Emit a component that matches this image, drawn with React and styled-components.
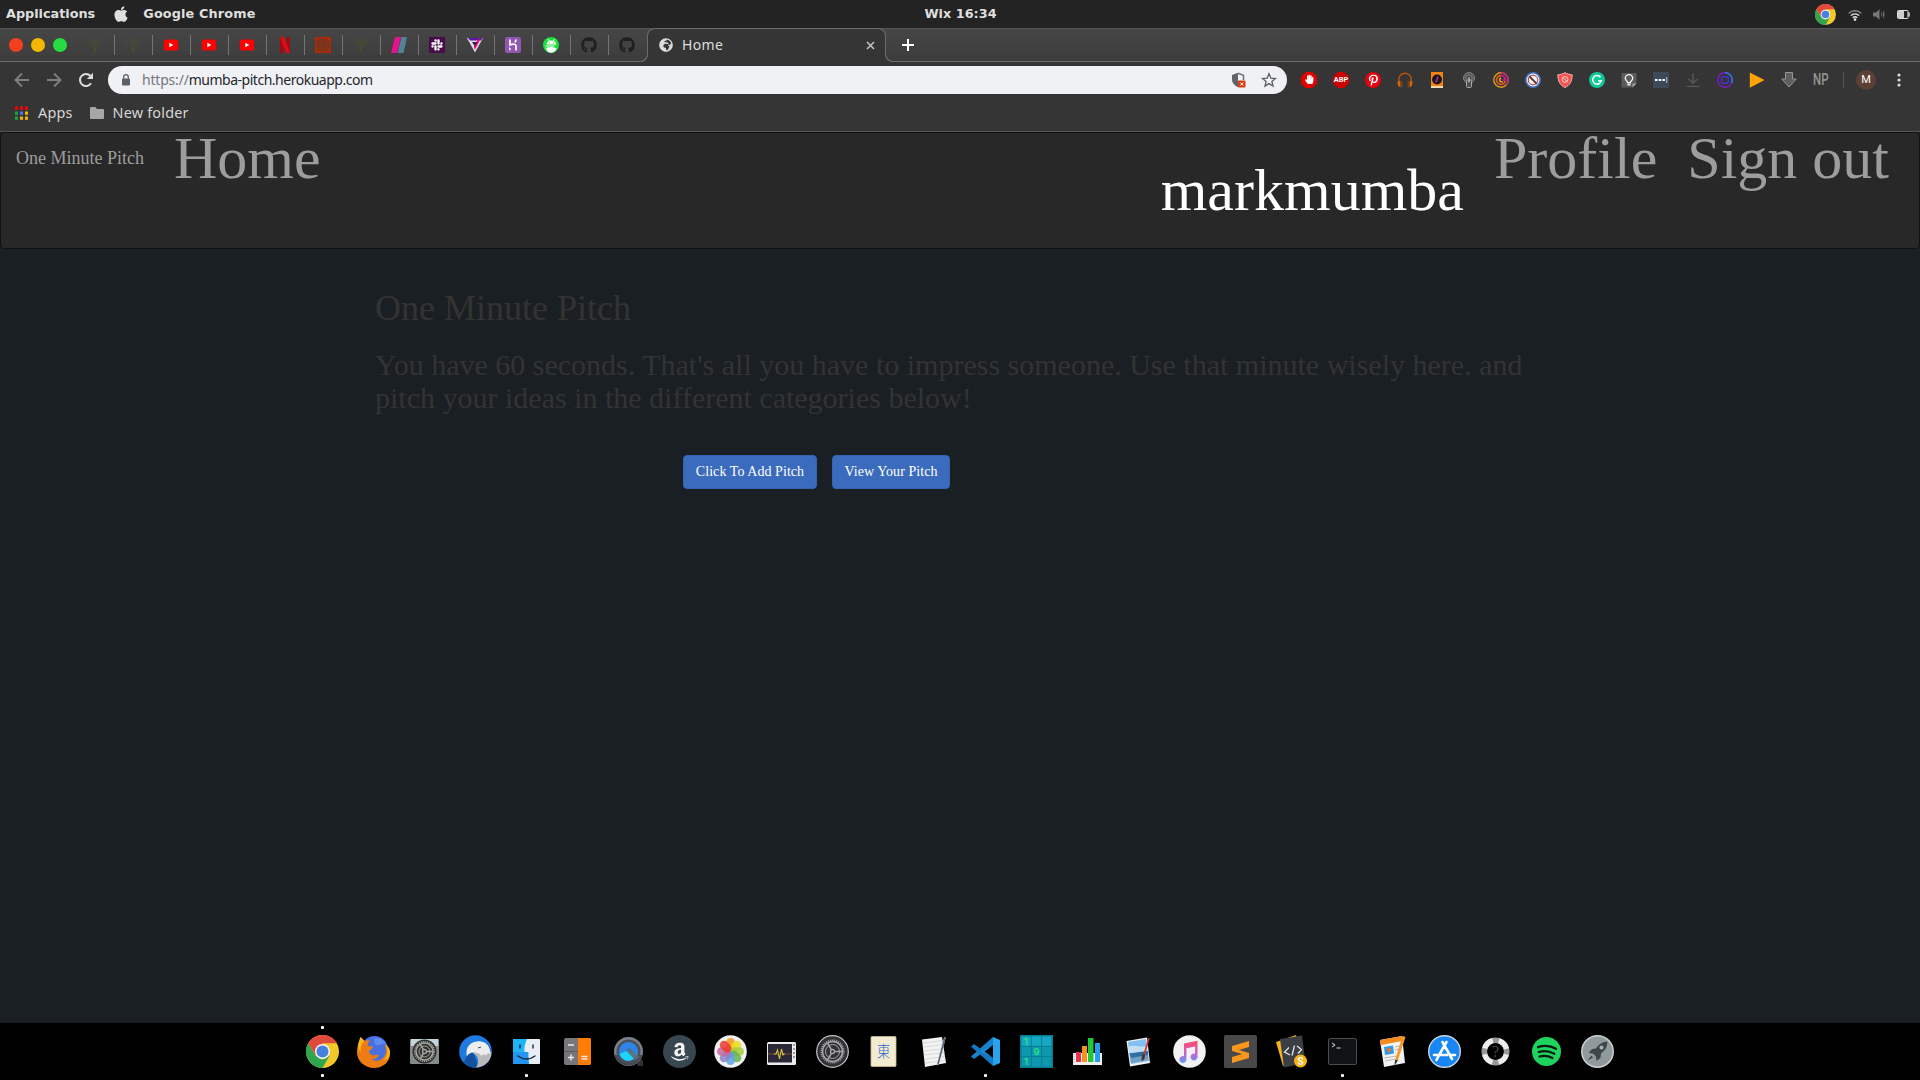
import React from "react";
import styled, { createGlobalStyle } from "styled-components";
import { FaApple, FaGithub, FaAmazon, FaSlack, FaPinterestP, FaHandPaper, FaGlobeAfrica } from "react-icons/fa";

const Global = createGlobalStyle`
  *, *::before, *::after { box-sizing: border-box; }
  body { margin: 0; background: #000; overflow: hidden; }
  svg { display: block; flex: none; }
`;

const UI = `"Noto Sans", "Open Sans", sans-serif`;

const Screen = styled.div`
  width: 1920px;
  height: 1080px;
  display: flex;
  flex-direction: column;
  overflow: hidden;
  background: #1a1f23;
  font-family: ${UI};
`;

/* ---------- system panel ---------- */
const Panel = styled.header`
  height: 28px;
  flex: none;
  display: grid;
  grid-template-columns: 1fr auto 1fr;
  align-items: center;
  padding: 0 5px 0 6px;
  background: #232323;
  color: #dfdfdf;
  font: bold 12.8px/28px "DejaVu Sans", sans-serif;
`;
const PanelLeft = styled.div`
  display: flex;
  align-items: center;
  height: 28px;
  padding-bottom: 1px;
`;
const AppleMark = styled(FaApple)`
  width: 18px;
  height: 18px;
  margin: 0 13px 0 17px;
`;
const AppName = styled.span`
  letter-spacing: 0.14px;
`;
const Clock = styled.div`
  padding-bottom: 1px;
  letter-spacing: 0.03px;
`;
const Tray = styled.div`
  display: flex;
  align-items: center;
  justify-content: flex-end;
  height: 28px;
`;
const TraySlot = styled.div`
  width: ${(p) => p.$w || 24}px;
  display: flex;
  justify-content: center;
`;

/* ---------- browser ---------- */
const TabStrip = styled.div`
  height: 34px;
  flex: none;
  display: flex;
  align-items: stretch;
  border-top: 1px solid #545454;
  background: linear-gradient(#464646, #3c3c3c);
  box-shadow: inset 0 -1px #6c6c6c;
`;
const WindowButtons = styled.div`
  width: 77px;
  display: flex;
  gap: 8px;
  align-items: center;
  padding: 0 0 1px 9px;
`;
const Light = styled.span`
  width: 14px;
  height: 14px;
  border-radius: 50%;
  background: ${(p) => p.$c};
`;
const PinnedTab = styled.div`
  width: 38px;
  display: flex;
  align-items: center;
  padding: 0 0 1px 10px;
  background: ${(p) => (p.$last ? "none" : "linear-gradient(#747474, #747474) 100% 6px / 1px 20px no-repeat")};
`;
const ActiveTab = styled.div`
  position: relative;
  width: 239px;
  margin: -1px 0 0 0;
  display: flex;
  align-items: center;
  padding: 0 10px 1px 11px;
  border: 1px solid #6c6c6c;
  border-bottom: 0;
  border-radius: 8px 8px 0 0;
  background: #353535;
  color: #dcdcdc;
  font-size: 14px;
  letter-spacing: 0.35px;
  &::before, &::after {
    content: "";
    position: absolute;
    bottom: 0;
    width: 8px;
    height: 8px;
  }
  &::before {
    left: -8px;
    background: radial-gradient(circle at 0 0, #3e3e3e 6.7px, #6c6c6c 7.2px, #6c6c6c 7.8px, #353535 8.3px);
  }
  &::after {
    right: -8px;
    background: radial-gradient(circle at 100% 0, #3e3e3e 6.7px, #6c6c6c 7.2px, #6c6c6c 7.8px, #353535 8.3px);
  }
`;
const TabTitle = styled.span`
  flex: 1;
  margin-left: 9px;
  padding-bottom: 2px;
`;
const NewTab = styled.div`
  display: flex;
  align-items: center;
  padding: 0 0 1px 15px;
`;
const Toolbar = styled.div`
  height: 36px;
  flex: none;
  display: flex;
  align-items: center;
  padding-left: 6px;
  background: #353535;
`;
const NavButton = styled.div`
  width: 32px;
  display: flex;
  justify-content: center;
  color: ${(p) => (p.$on ? "#dcdcdc" : "#7f7f7f")};
`;
const Omnibox = styled.div`
  width: 1179px;
  height: 28px;
  margin-left: 6px;
  display: flex;
  align-items: center;
  border-radius: 14px;
  padding: 0 10px 0 13px;
  background: #f0f1f5;
`;
const Url = styled.div`
  flex: 1;
  margin-left: 11px;
  padding-bottom: 1px;
  color: #25272b;
  font-size: 14px;
  letter-spacing: -0.48px;
  white-space: nowrap;
  span { color: #74777c; letter-spacing: -0.2px; }
`;
const OmniSlot = styled.div`
  width: 16px;
  margin-left: ${(p) => p.$gap || 0}px;
`;
const Extensions = styled.div`
  display: flex;
  align-items: center;
  margin-left: 6px;
`;
const Ext = styled.div`
  width: 32px;
  display: flex;
  align-items: center;
  justify-content: center;
`;
const Monogram = styled.span`
  font: 500 16px/20px Roboto, sans-serif;
  color: #949494;
  transform: scaleX(0.72);
`;
const ToolbarRule = styled.div`
  width: 1px;
  height: 16px;
  margin-left: 6px;
  background: #535353;
`;
const Avatar = styled.div`
  width: 20px;
  height: 20px;
  margin: 0 21px 0 12px;
  border-radius: 50%;
  background: #5c4033;
  color: #fff;
  font: 400 11px/20px Roboto, sans-serif;
  text-align: center;
`;
const Bookmarks = styled.div`
  height: 34px;
  flex: none;
  display: flex;
  align-items: center;
  padding: 0 0 4px 15px;
  background: #353535;
  border-bottom: 1px solid #555;
  color: #d6d6d6;
  font-size: 14.4px;
`;
const BookmarkLabel = styled.span`
  margin: 0 ${(p) => p.$after || 0}px 0 ${(p) => p.$before}px;
  letter-spacing: ${(p) => p.$track || 0}px;
`;

/* ---------- page ---------- */
const Page = styled.main`
  flex: 1;
  min-height: 0;
  background: #1a1f23;
  font-family: "Liberation Serif", "Times New Roman", serif;
`;
const Navbar = styled.nav`
  height: 117px;
  display: flex;
  align-items: flex-start;
  padding: 0 15px;
  border: 1px solid #101010;
  border-radius: 4px;
  background: #282828;
  color: #9d9d9d;
`;
const Brand = styled.a`
  padding: 15px 15px 15px 0;
  font-size: 18px;
  line-height: 20px;
`;
const NavLink = styled.a`
  padding: 15px;
  font-size: 60px;
  line-height: 20px;
  white-space: nowrap;
`;
const Spacer = styled.div`
  flex: 1;
`;
const UserName = styled.p`
  margin: 15px;
  color: #fff;
  font-size: 60px;
  line-height: 84px;
`;
const Container = styled.section`
  width: 1170px;
  margin: 0 auto;
  color: #333;
`;
const Title = styled.h2`
  margin: 39px 0 0;
  font-weight: 400;
  font-size: 36px;
  line-height: 40px;
`;
const Lead = styled.h3`
  margin: 20px 0 0;
  font-weight: 400;
  font-size: 30px;
  line-height: 33px;
`;
const Actions = styled.div`
  display: flex;
  gap: 15px;
  margin: 41px 0 0 308px;
`;
const Button = styled.button`
  width: ${(p) => p.$w}px;
  height: 34px;
  padding: 6px 0;
  border: 1px solid #3464b4;
  border-radius: 4px;
  background: #3b6bbd;
  color: #fff;
  font: 14px/20px "Liberation Serif", serif;
  letter-spacing: 0.06px;
`;

/* ---------- dock ---------- */
const Dock = styled.footer`
  height: 57px;
  flex: none;
  display: flex;
  justify-content: center;
  padding-right: 1px;
  background: #000;
`;
const DockItem = styled.div`
  width: 51px;
  display: flex;
  flex-direction: column;
  align-items: center;
  justify-content: space-between;
  padding: 3px 0;
`;
const Dot = styled.i`
  width: 3px;
  height: 3px;
  border-radius: 1px;
  background: ${(p) => (p.$on ? "#fff" : "transparent")};
`;

const S = ({ n = 16, v = 16, children, ...r }) => (
  <svg width={n} height={n} viewBox={`0 0 ${v} ${v}`} fill="none" {...r}>{children}</svg>
);

/* favicons */
const Tree = () => (
  <S stroke="#465030">
    <path d="M6 15.500c2-2 1.500-5 1-7M9 15.500c-1-2-.5-4 .5-6M7.500 10L4 6M8 8V4M9 9l4-3" strokeWidth="1.100" />
    <path d="M2 5h3M4 3h3M7 1.500h3M10 3.500h3M12 6h3M1.500 7.500h2M6 5.500h2M9 5.500h2" strokeWidth="1.500" strokeDasharray="1.600 .7" />
  </S>
);
const YouTube = () => (
  <S><rect x=".8" y="2.500" width="14.400" height="11" rx="2.600" fill="#f00" /><path d="M6.300 5.700v4.600L10.300 8z" fill="#fff" /></S>
);
const Netflix = () => (
  <S><path d="M3 0h3.600v16H3zM9.400 0H13v16H9.400z" fill="#a40a10" /><path d="M3 0h3.600L13 16H9.400z" fill="#e50914" /></S>
);
const Swirl = () => (
  <S>
    <rect width="16" height="16" fill="#ad2a08" />
    <g stroke="#5e3a2c" strokeWidth="1.100">
      <circle cx="8" cy="8" r="6" /><circle cx="8" cy="8" r="1.500" />
      {[0, 60, 120, 180, 240, 300].map((a) => <path key={a} d="M8 6.500c2-1 4-.5 5 2" transform={`rotate(${a} 8 8)`} />)}
    </g>
  </S>
);
const Slashes = () => (
  <S><path d="M10.500 0H16l-3.500 16H6.500z" fill="#4f8496" /><path d="M4 0h6L6 16H0z" fill="#e6118e" /></S>
);
const Slack = () => (
  <S><rect width="16" height="16" fill="#4a0b4d" /><g transform="translate(1.500 1.500)"><FaSlack size={13} color="#fff" /></g></S>
);
const Vee = () => (
  <S>
    <path d="M0 1h16L8 15.500z" fill="#e4d7ea" /><path d="M1 1h14.500l-1.300 2.500H3z" fill="#5b1aa5" />
    <path d="M13.500 2L8 12.500 6.800 10l3.800-7z" fill="#f2068c" /><path d="M5 5h5.500L8 9.500z" fill="#32253c" />
  </S>
);
const Heroku = () => (
  <S><rect width="16" height="16" rx="2" fill="#9357b3" /><path d="M5 2.500V8c3-1.300 6-1 6 1v4.500M11 2.500c0 1.500-.6 2.300-1.300 3" stroke="#fff" strokeWidth="1.700" /><path d="M4.200 10v3.800L6.200 12z" fill="#fff" /></S>
);
const Android = () => (
  <S>
    <circle cx="8" cy="8" r="8" fill="#1ce03c" />
    <path d="M3.500 7.500C4 4.500 6 3.500 8.500 3.500s4.500 1.500 4.800 4zM3 11c3-1.500 7-1.500 10.500.5-1 3-3 4.200-5.500 4.200S4 14 3 11z" fill="#fff" />
    <path d="M5 2l1.300 2M11.500 2l-1 2M2.500 9h9" stroke="#fff" strokeWidth="1" /><circle cx="6.500" cy="5.800" r=".6" fill="#1ce03c" /><circle cx="10.500" cy="5.800" r=".6" fill="#1ce03c" />
  </S>
);
const Git = () => <FaGithub size={16} color="#1f1f1f" />;
const PINNED = [Tree, Tree, YouTube, YouTube, YouTube, Netflix, Swirl, Tree, Slashes, Slack, Vee, Heroku, Android, Git, Git];

/* chrome logo, shared by tray and dock */
const Chrome = ({ n }) => (
  <S n={n} v={33}>
    <circle cx="16.500" cy="16.500" r="16.500" fill="#f5c829" />
    <path d="M2.200 8.250A16.500 16.500 0 0 1 30.800 8.250H16.500L9.350 20.600z" fill="#e2493d" />
    <path d="M2.200 8.250L9.350 20.600 16.500 24.750 23.650 20.600 16.500 33A16.500 16.500 0 0 1 2.200 8.250z" fill="#2fa54f" />
    <circle cx="16.500" cy="16.500" r="7.600" fill="#f3f3f3" /><circle cx="16.500" cy="16.500" r="6" fill="#4681dd" />
  </S>
);

/* extension icons */
const Oct = "M4.700 0h6.600L16 4.700v6.600L11.300 16H4.700L0 11.300V4.700z";
const AbpBadge = styled.span`
  width: 16px;
  height: 16px;
  display: flex;
  justify-content: center;
  background: #d10000;
  clip-path: polygon(30% 0, 70% 0, 100% 30%, 100% 70%, 70% 100%, 30% 100%, 0 70%, 0 30%);
  color: #fff;
  font: 700 7.4px/16px Roboto, sans-serif;
`;
const EXT = [
  <S><path d={Oct} fill="#e60000" /><g transform="translate(3.500 2.500)"><FaHandPaper size={9.500} color="#fff" /></g></S>,
  <AbpBadge>ABP</AbpBadge>,
  <S><circle cx="8" cy="8" r="8" fill="#e3000f" /><g transform="translate(2.400 2.400)"><FaPinterestP size={12} color="#fff" /></g></S>,
  <S><path d="M1.800 11V7.500a6.200 6.200 0 0 1 12.400 0V11" stroke="#b5540c" strokeWidth="1.400" /><path d="M1 9h2.500v6.500C1.500 15 .5 13 .5 11zM15 9h-2.500v6.500c2-.5 3-2.500 3-4.500z" fill="#d9620c" /><path d="M4.500 9v6.500M11.500 9v6.500" stroke="#6b4225" strokeWidth="2" /></S>,
  <S><rect x="2" y="0" width="12" height="16" fill="#ef8410" /><path d="M2 14h12v2H2z" fill="#f3d9ae" /><circle cx="8" cy="7.500" r="4.900" fill="#17131d" /><path d="M9 4.500L7 10.500" stroke="#a72c8c" strokeWidth="1.800" /></S>,
  <S stroke="#8f8f8f"><circle cx="8" cy="6" r="5.400" fill="#505050" /><circle cx="8" cy="6" r="3.200" strokeWidth=".9" fill="#444" /><rect x="5.500" y="8" width="5" height="7.500" rx="1.200" fill="#4c4c4c" stroke="#aaa" /><path d="M8 5v5.500" stroke="#ddd" /></S>,
  <S strokeWidth="1.400"><circle cx="8" cy="8" r="7.200" stroke="#e39a18" /><path d="M8 .8a7.200 7.200 0 0 1 5 12.300" stroke="#b5257b" /><path d="M12.200 9a4.400 4.400 0 1 1-4-5.400" stroke="#f05a18" strokeWidth="1.600" /><path d="M8 3.500a4.500 4.500 0 0 1 4.500 4.500h-3" stroke="#d418a0" strokeWidth="1.600" /><path d="M9.800 9.500A2 2 0 1 1 8 6" stroke="#f0b018" /></S>,
  <S><circle cx="8" cy="8" r="7.200" fill="#f3f3f3" stroke="#3f6fc6" strokeWidth="1.600" /><circle cx="8" cy="8" r="4.800" stroke="#a33" strokeWidth="1" /><path d="M4.200 4.200l7.600 7.600" stroke="#5b2c34" strokeWidth="1.900" /></S>,
  <S><path d="M8 .6c2 1.300 4.500 2 7.200 2.200C15 9.500 12.800 13.300 8 15.500 3.200 13.300 1 9.500.8 2.800 3.500 2.600 6 1.900 8 .6z" fill="#f4524e" stroke="#f4b6b2" strokeWidth="1" /><circle cx="8" cy="7.500" r="2.900" stroke="#fbd0cd" /><path d="M6 5.500l4 4" stroke="#fbd0cd" /></S>,
  <S><circle cx="8" cy="8" r="8" fill="#10c998" /><path d="M11.500 5.300A4.300 4.300 0 1 0 12.200 8.800H9" stroke="#fff" strokeWidth="1.500" /></S>,
  <S><path d="M.5 1h15v10.500l-4 4H.5z" fill="#5b5b5b" /><path d="M15.500 11.500l-4 4v-4z" fill="#a5a5a5" /><path d="M6.500 9.800C5 8.800 4.300 7.500 4.300 6.300a3.700 3.700 0 0 1 7.400 0c0 1.200-.7 2.500-2.200 3.500v1h-3zM6.500 12.700h3" stroke="#f2f2f2" strokeWidth="1.400" /></S>,
  <S><rect width="16" height="16" rx="1" fill="#3d4a59" /><path d="M2 7h2.500v2H2zM5.700 7h2.500v2H5.700zM9.400 7h2.500v2H9.400z" fill="#fff" /><path d="M13.700 5v6" stroke="#aaa" strokeWidth="1.200" /></S>,
  <S stroke="#5a5a5a" strokeWidth="1.300"><path d="M8 1.500v9.500M3.500 7L8 11.300 12.500 7M1.500 14.300h13" /></S>,
  <S strokeWidth="1.300"><circle cx="8" cy="8" r="7.300" stroke="#8a16e0" /><path d="M8 .7a7.300 7.300 0 0 1 6.500 10.300" stroke="#1a8af0" /><rect x="4.700" y="4.700" width="6.600" height="6.600" rx="1.800" stroke="#4a30e8" /></S>,
  <S><path d="M.8.5L15.500 8 .8 15.800z" fill="#ffa408" /></S>,
  <S><path d="M4.500.5h7V7h3.700L8 15 .8 7h3.700z" fill="#5e5e5e" stroke="#969696" strokeWidth="1" /></S>,
  <Monogram>NP</Monogram>,
];

/* dock icons */
const D = (p) => <S n={33} v={33} {...p} />;
const Gear = ({ c, r = 10 }) => (
  <g stroke={c}>
    <circle cx="16.500" cy="16.500" r={r} strokeWidth="1.500" />
    <circle cx="16.500" cy="16.500" r={r + 1.300} strokeWidth="1.500" strokeDasharray="1.100 1" />
    <circle cx="16.500" cy="16.500" r={r - 3} strokeWidth="1" />
    <circle cx="16.500" cy="16.500" r="2" strokeWidth="1.300" />
    <path d={`M18.500 16.500H${16.5 + r}M15.500 14.800L${16.5 - r / 2} ${16.5 - r * 0.86}M15.500 18.200L${16.5 - r / 2} ${16.5 + r * 0.86}`} strokeWidth="1.600" />
  </g>
);
const DOCK = [
  <Chrome n={33} />,
  <D>
    <circle cx="17.500" cy="14.500" r="13.500" fill="#4a6fe0" />
    <path d="M18 3c5 0 9 2 11 6-4-2-6 2-9 1s-3-4-2-7z" fill="#5f8ef2" />
    <path d="M1.500 8L3.500 2l4 4c2-1 4-1 5.500 0-2 1.500-2.500 3-2 5 2 0 4 0 5 1-.5 2-3 3-4 4 0 3 3 5 6.500 4 1.500-.5 3-.5 3 .5-1 2.500-4 4-7 3.800 7 4 14-1 14.500-8 .2-3-.3-5-1.500-7 3.500 2 5.500 5.500 5.500 9.500C33 27 26 33 17 33S0 26 0 17.500C0 14 .5 11 1.500 8z" fill="#ee7c15" />
    <path d="M1.500 8L3.500 2l4 4C4 9 3 13 4 17c-3-2-3-6-2.500-9zM28 9.500c4 5 3 12-2 16 6-1 8-7 6.500-11-.8-2.500-2.500-4.300-4.500-5z" fill="#f7b91c" />
  </D>,
  <D><rect x="2" y="4" width="29" height="25" rx="1" fill="#858b8d" /><path d="M3 4h27v7H3z" fill="#c3d4da" /><circle cx="16.500" cy="16.500" r="12" fill="#30302f" /><Gear c="#a7a7a3" r={8.500} /></D>,
  <D>
    <circle cx="16.500" cy="16.500" r="16.300" fill="#1f7ae0" />
    <path d="M5 27C9 32 15 34 20 32.500L14 17l-6 3z" fill="#12519e" />
    <path d="M14 18c5 3 7 8 3 14.500C26 32 32 26 32.500 18L25 10z" fill="#b9b9b9" />
    <path d="M7.500 17C8 9 15 5.500 22 6.500c6 1 9 5 9.500 12.500-2-1.500-4-1-4 1.500-2-1.500-4-1.500-5 .5-2-3-5-4-8.500-3.500-3 .2-5 1.500-6 4-.5-1.500-.7-3-.5-4.500z" fill="#ededed" />
    <path d="M19 13l3-1" stroke="#444" />
  </D>,
  <D>
    <rect x="3" y="4" width="27" height="25" rx="1" fill="#e9eef5" /><path d="M4 4h13c-2 5-3 8-2.500 13h3.800c-.3 5 0 8 .9 12H4a1 1 0 0 1-1-1V5a1 1 0 0 1 1-1z" fill="#1fb5f5" /><path d="M3 17h15.300l.6 12H3z" fill="#2788ee" opacity=".7" />
    <path d="M10 10v3M23 10v3M8 21c5 4 12 4 17 0" stroke="#18283a" strokeWidth="1.400" strokeLinecap="round" />
  </D>,
  <D><rect x="3" y="3" width="27" height="27" rx="2" fill="#77777b" /><path d="M17 3h11a2 2 0 0 1 2 2v23a2 2 0 0 1-2 2H17z" fill="#ff7d05" /><path d="M3 16.500h14" stroke="#555" strokeWidth=".8" /><path d="M7 10h6M7 22.500h6M10 19.500v6M20.500 21.500h6M20.500 24h6" stroke="#e8e8e8" strokeWidth="1.500" /></D>,
  <D><path d="M23 25l4-3 4 4v5h-5z" fill="#2f3338" /><circle cx="16.500" cy="16.500" r="14.500" fill="#7b828e" /><path d="M2.500 20a14.500 14.500 0 0 0 28 0z" fill="#41464f" /><circle cx="16.500" cy="16.500" r="12" fill="#4b515c" /><circle cx="16.500" cy="16.500" r="9.500" fill="#2f84ea" /><path d="M7.500 19c3 9 14 9 18 0L16 15z" fill="#1fd4f8" /><path d="M14 15.500l3-2.500 11 9-4 4z" fill="#5f6672" opacity=".85" /></D>,
  <D><circle cx="16.500" cy="16.500" r="16.500" fill="#37474f" /><g transform="translate(6.500 6.500)"><FaAmazon size={20.500} color="#f5f5f5" /></g></D>,
  <D><circle cx="16.500" cy="16.500" r="16.300" fill="#f1f1f1" />
    {["#f7941b", "#e8e01b", "#a8cc3c", "#69b54a", "#5aa4e4", "#8a84c4", "#c8679f", "#ec3b30"].map((c, i) => (
      <rect key={c} x="12.200" y="3" width="8.600" height="13.300" rx="4.300" fill={c} opacity=".85" transform={`rotate(${i * 45} 16.500 16.500)`} />))}
  </D>,
  <D><rect x="2" y="7" width="29" height="23" rx="1.500" fill="#ececec" /><rect x="3" y="9" width="24" height="18.500" fill="#2b2838" /><path d="M3 19h24" stroke="#8c6a35" strokeWidth=".7" /><path d="M9 19h2l1.500-4 2 9 2-10 1.500 6 1.500-1.500" stroke="#d8c13a" strokeWidth="1.100" /><path d="M29 9v14" stroke="#888" strokeWidth="1.600" strokeDasharray="2 2" /></D>,
  <D><circle cx="16.500" cy="16.500" r="15.800" fill="#323236" stroke="#c4c4c4" strokeWidth="1.200" /><Gear c="#a6a6a8" r={10} /></D>,
  <D><rect x="4" y="1.500" width="25" height="30" rx="1" fill="#f2ebd1" stroke="#cdbd8c" strokeWidth=".8" /><text x="16.500" y="22.300" textAnchor="middle" fontSize="15.500" fontFamily="'Noto Sans CJK JP', sans-serif" fontWeight="300" fill="#2a67c9" transform="translate(2.500 0) scale(.85 1)">東</text></D>,
  <D><path d="M4 4.500L24 2l4 26-21 4z" fill="#f3f3f3" /><path d="M5 8l20-2.500M5.500 12l20-2.500M6 16l20-2.500M6.500 20l20-2.500M7 24l20-2.500M7.500 28l20-2.500" stroke="#d0d0d0" strokeWidth=".8" /><path d="M26 2l2 .6L21 29l-2 2 .3-3z" fill="#8899aa" /><path d="M27 3l-7 26" stroke="#3c4550" strokeWidth=".8" /></D>,
  <D><path d="M24 2l7 3v23l-7 3z" fill="#2aa3ee" /><path d="M24 2L2 21.500l3 2.500L24 10z" fill="#1783cf" /><path d="M24 31L2 11.500 5 9l19 14z" fill="#1479c0" /><path d="M24 2v9L11 16.500 24 22v9z" fill="#1c8fdd" /><path d="M24 10.500v12L15.500 16.500z" fill="#000" /></D>,
  <D><rect width="33" height="33" fill="#067f92" /><g fill="#16a7c4">{[0, 1, 2].flatMap((r) => [0, 1, 2].map((c) => <rect key={r * 3 + c} x={1.5 + c * 10.300} y={1.500 + r * 10.300} width="9.300" height="9.300" opacity={r ? 0.6 : 1} />))}</g><g fill="#25e57c" fontSize="9.500" fontFamily="Inter, sans-serif" fontWeight="600" textAnchor="middle"><text x="6" y="9.700">1</text><text x="16.500" y="20">9</text><text x="6" y="30.300">1</text></g></D>,
  <D><path d="M2 18h29v12H2z" fill="#f0f0f0" /><path d="M5 17h5v10H5z" fill="#e8304e" /><path d="M11 11h5v16h-5z" fill="#f7901e" /><path d="M17 3h5.500v24H17z" fill="#22c83a" /><path d="M24 8h5v19h-5z" fill="#269df0" /><path d="M3 19v9" stroke="#888" strokeDasharray="1 1.500" /></D>,
  <D><path d="M4.500 6L25 2.500 28 28 8 31.500z" fill="#f1f1f1" /><path d="M6 7l18-3 2.700 22L9 29z" fill="#83bff0" /><path d="M7.500 18l18.500-2 .7 9L9 28z" fill="#6fa0c8" /><path d="M7.500 18c6 1 12-2 18.500-2v4l-17 3z" fill="#2f6da5" /><path d="M6.500 12c5-3 12 1 18.500-1v5l-18 2z" fill="#c4dff2" /><path d="M27 3L22 20" stroke="#c33" strokeWidth="1.700" /><path d="M21 19c-2 2-1 5-1.500 7 3-1 4-4 3-6.500z" fill="#4b3327" /></D>,
  <D><defs><linearGradient id="note" x1="0" y1="0" x2="0" y2="1"><stop stopColor="#fb4a63" /><stop offset=".55" stopColor="#d05ec8" /><stop offset="1" stopColor="#5aa2f7" /></linearGradient></defs><circle cx="16.500" cy="16.500" r="16.300" fill="#f2f2f4" /><path d="M11 8.500l13.500-2.700v16.200a3.500 3.500 0 1 1-2.400-3.300V11.500l-8.700 1.800v11.200a3.500 3.500 0 1 1-2.400-3.300z" fill="url(#note)" /></D>,
  <D><rect width="33" height="33" rx="1.500" fill="#484848" /><path d="M8 11l17-5v6l-10 3 10 3v5L8 28v-6l10-3-10-3z" fill="#f8961e" /></D>,
  <D><path d="M1 7l20-7 6 24-19 7z" fill="#f4b41c" /><path d="M5 4l22-3.500 3.500 28L9 32.500z" fill="#3b3f45" /><path d="M14 12.500l-4.500 4.500 5.500 3M22 11l4.500 3.500-3.500 4M19.500 10.500L17 20.500" stroke="#e4e4e4" strokeWidth="1.300" /><circle cx="25.500" cy="26" r="6.500" fill="#f9b317" /><text x="25.500" y="29.500" textAnchor="middle" fontSize="10" fontWeight="600" fontFamily="Roboto, sans-serif" fill="#fff">S</text></D>,
  <D><rect x="2.500" y="3.500" width="28" height="26" rx="1.500" fill="#111213" stroke="#4d4d4d" /><path d="M6 8l3 2-3 2M10.500 13h4" stroke="#ddd" strokeWidth="1" /></D>,
  <D><path d="M3 5l22-4 3 27-21 4z" fill="#f3f3f3" /><path d="M3 5l22-4 .7 5L3.700 10z" fill="#f48a1d" /><path d="M7 12l9-1.500 1 8L8 20z" fill="#2d9ce8" /><path d="M9 13l6 1-3 4z" fill="#ee7427" /><path d="M18 12l5-1M18 15l4-1M7.500 23l12-2M8 26l11-2" stroke="#b5b5b5" /><path d="M25.500 1l3 1-7.500 23-3 0z" fill="#f39a2b" /><path d="M18 25l3 0-3.500 6z" fill="#333" /></D>,
  <D><circle cx="16.500" cy="16.500" r="15.800" fill="#1787f5" stroke="#cbd5df" strokeWidth="1.400" /><path d="M18.500 7L10 22M14.500 7l9.500 17M6 20h13M22.500 20H27M9.500 23l-1 2" stroke="#fff" strokeWidth="2.600" strokeLinecap="round" /></D>,
  <D><circle cx="16.500" cy="16.500" r="11.200" stroke="#999" strokeWidth="5.600" /><circle cx="16.500" cy="16.500" r="11.200" stroke="#eee" strokeWidth="5.200" strokeDasharray="11.600 6" transform="rotate(15 16.500 16.500)" /><text x="16.500" y="22" textAnchor="middle" fontSize="16" fontFamily="'Liberation Serif', serif" fill="#4a4a4a">?</text></D>,
  <D><circle cx="16.500" cy="16.500" r="14.500" fill="#1fd35f" /><path d="M8 12.200c6-2 13-1.300 18 1.600M8.800 17c5-1.500 11-.8 15.500 1.700M9.500 21.500c4.500-1.200 9-.6 13 1.500" stroke="#0c1a10" strokeWidth="2.300" strokeLinecap="round" /></D>,
  <D><circle cx="16.500" cy="16.500" r="15.700" fill="#909a9d" stroke="#cbcfd1" strokeWidth="1.500" /><path d="M26.500 6.500c-6 .5-9.500 3.500-11.500 7l-4 .5-3.500 4 4.500.5 3 3 .5 4.500 4-3 .5-4.500c4-3 6-6 6.500-12zM10.500 20.500l-4 5 5.500-3z" fill="#40474b" /><circle cx="20.500" cy="12.500" r="2" fill="#aab1b4" /></D>,
];
/* running indicators: [top, bottom] by dock position */
const RUNNING = { 0: [1, 1], 4: [0, 1], 13: [0, 1], 20: [0, 1] };

export default function App() {
  return (
    <Screen>
      <Global />
      <Panel>
        <PanelLeft>Applications<AppleMark /><AppName>Google Chrome</AppName></PanelLeft>
        <Clock>Wix 16:34</Clock>
        <Tray>
          <TraySlot $w={36}><Chrome n={21} /></TraySlot>
          <TraySlot>
            <S n={14} stroke="#e6e6e6" strokeWidth="1.500"><path d="M.8 6.200a10 10 0 0 1 14.400 0" stroke="#888" /><path d="M3.200 8.700a6.800 6.800 0 0 1 9.600 0M5.500 11.200a3.600 3.600 0 0 1 5 0" /><circle cx="8" cy="13.200" r=".8" fill="#e6e6e6" /></S>
          </TraySlot>
          <TraySlot>
            <S n={13} fill="#777"><path d="M0 5.500h3.500L8 1.500v13L3.500 10.500H0z" fill="#777" /><path d="M10 5.500c1 1.500 1 3.500 0 5M12.300 3.500c2 3 2 6 0 9" stroke="#5e5e5e" strokeWidth="1.300" /></S>
          </TraySlot>
          <TraySlot>
            <svg width="13" height="9" viewBox="0 0 13 9" fill="none"><rect x=".5" y=".5" width="10.500" height="8" rx="1" stroke="#ddd" /><path d="M1 1h6v7H1z" fill="#ccc" /><path d="M12 2.500v4" stroke="#ddd" strokeWidth="1.500" /></svg>
          </TraySlot>
        </Tray>
      </Panel>

      <TabStrip>
        <WindowButtons><Light $c="#f2401f" /><Light $c="#f2b800" /><Light $c="#27dc40" /></WindowButtons>
        {PINNED.map((Icon, i) => <PinnedTab key={i} $last={i === PINNED.length - 1}><Icon /></PinnedTab>)}
        <ActiveTab>
          <FaGlobeAfrica size={14} />
          <TabTitle>Home</TabTitle>
          <S n={9} v={9} stroke="#c4c4c4" strokeWidth="1.500"><path d="M1 1l7 7M8 1L1 8" /></S>
        </ActiveTab>
        <NewTab><S n={14} v={14} stroke="#fff" strokeWidth="2"><path d="M7 1v12M1 7h12" /></S></NewTab>
      </TabStrip>

      <Toolbar>
        <NavButton><S stroke="currentColor" strokeWidth="1.900"><path d="M15 8H2M8 1.500L1.500 8 8 14.500" /></S></NavButton>
        <NavButton><S stroke="currentColor" strokeWidth="1.900"><path d="M1 8h13M8 1.500L14.500 8 8 14.500" /></S></NavButton>
        <NavButton $on><S><path d="M13 11.300A6 6 0 1 1 12.500 4" stroke="currentColor" strokeWidth="2" /><path d="M15 .8V7H8.800z" fill="currentColor" /></S></NavButton>
        <Omnibox>
          <svg width="10" height="12" viewBox="0 0 10 12" fill="none"><rect x="1" y="4.500" width="8" height="7" rx="1" fill="#5b5f66" /><path d="M2.700 5V3a2.300 2.300 0 0 1 4.600 0v2" stroke="#5b5f66" strokeWidth="1.300" /></svg>
          <Url><span>https://</span>mumba-pitch.herokuapp.com</Url>
          <OmniSlot>
            <S><path d="M8 .8L2 3v4.500c0 3.500 2.500 6 6 7.700z" fill="#5f646b" /><path d="M8 1.300l5.500 2V8" stroke="#6f747b" strokeWidth="1.500" /><rect x="8" y="8.500" width="7.500" height="7" rx="1" fill="#d93a15" /><path d="M10.300 10.500l3 3M13.300 10.500l-3 3" stroke="#fff" /></S>
          </OmniSlot>
          <OmniSlot $gap={15}>
            <S><path d="M8 1.800l1.800 4.300 4.700.4-3.600 3 1.100 4.600L8 11.600l-4 2.500 1.100-4.600-3.600-3 4.700-.4z" stroke="#5b5f66" strokeWidth="1.300" /></S>
          </OmniSlot>
        </Omnibox>
        <Extensions>{EXT.map((icon, i) => <Ext key={i}>{icon}</Ext>)}</Extensions>
        <ToolbarRule />
        <Avatar>M</Avatar>
        <svg width="4" height="14" viewBox="0 0 4 14" fill="#dcdcdc"><circle cx="2" cy="2" r="1.600" /><circle cx="2" cy="7" r="1.600" /><circle cx="2" cy="12" r="1.600" /></svg>
      </Toolbar>

      <Bookmarks>
        <svg width="13" height="14" viewBox="0 0 13 14">
          {["#f00", "#f00", "#f00", "#12a54c", "#3f78f0", "#f5b400", "#12a54c", "#f5b400", "#f5b400"].map((c, i) => (
            <rect key={i} x={(i % 3) * 5} y={Math.floor(i / 3) * 5 + 0.500} width="3" height="3.300" fill={c} />))}
        </svg>
        <BookmarkLabel $before={10} $after={17} $track={0.2}>Apps</BookmarkLabel>
        <svg width="14" height="12" viewBox="0 0 14 12"><path d="M1 0h4.500L7 2h6a1 1 0 0 1 1 1v8a1 1 0 0 1-1 1H1a1 1 0 0 1-1-1V1a1 1 0 0 1 1-1z" fill="#a6a6a8" /></svg>
        <BookmarkLabel $before={9} $track={0.2}>New folder</BookmarkLabel>
      </Bookmarks>

      <Page>
        <Navbar>
          <Brand>One Minute Pitch</Brand>
          <NavLink>Home</NavLink>
          <Spacer />
          <UserName>markmumba</UserName>
          <NavLink>Profile</NavLink>
          <NavLink>Sign out</NavLink>
        </Navbar>
        <Container>
          <Title>One Minute Pitch</Title>
          <Lead>You have 60 seconds. That's all you have to impress someone. Use that minute wisely here. and pitch your ideas in the different categories below!</Lead>
          <Actions><Button $w={134}>Click To Add Pitch</Button><Button $w={118}>View Your Pitch</Button></Actions>
        </Container>
      </Page>

      <Dock>
        {DOCK.map((icon, i) => {
          const [top, bottom] = RUNNING[i] || [0, 0];
          return <DockItem key={i}><Dot $on={top} />{icon}<Dot $on={bottom} /></DockItem>;
        })}
      </Dock>
    </Screen>
  );
}
